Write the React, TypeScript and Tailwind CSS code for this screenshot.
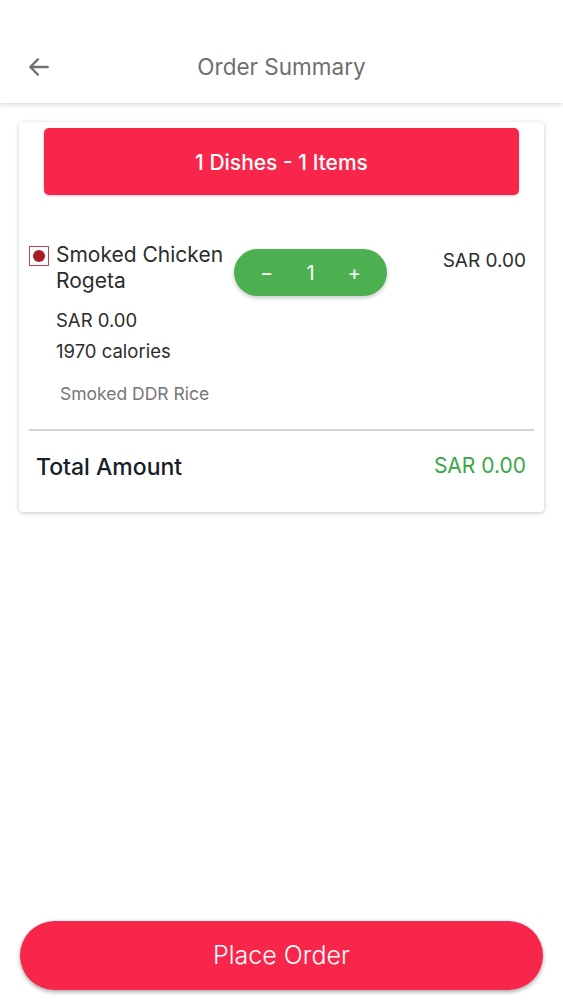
import React from 'react';

function BackArrow() {
  return (
    <svg width="26" height="26" viewBox="0 0 24 24" fill="none" stroke="#707070" strokeWidth="2.2" strokeLinecap="round" strokeLinejoin="round">
      <path d="M20 12H4.5" />
      <path d="M11 5l-7 7 7 7" />
    </svg>
  );
}

export default function App() {
  return (
    <div className="w-[563px] h-[1000px] bg-white flex flex-col" style={{ fontFamily: 'Inter, "Noto Sans", sans-serif' }}>
      {/* Header */}
      <div className="h-[103px] shrink-0 bg-white shadow-[0_2px_4px_rgba(0,0,0,0.14)] flex items-end pb-[22px] px-[25px] relative z-10">
        <button className="w-[28px] h-[28px] flex items-center justify-center">
          <BackArrow />
        </button>
        <div className="flex-1 text-center text-[22.5px] text-[#6f6f6f] pr-[28px] leading-[28px]">Order Summary</div>
      </div>

      {/* Card */}
      <div className="px-[19px] pt-[19px]">
        <div className="bg-white rounded-[4px] shadow-[0_1px_4px_rgba(0,0,0,0.22)] pt-[6px] pb-[27px]">
          <div className="mx-[25px] h-[67px] rounded-[5px] bg-[#f9264b] shadow-[0_1px_3px_rgba(0,0,0,0.2)] flex items-center justify-center text-white text-[21px] font-medium pt-[2px]">
            1 Dishes - 1 Items
          </div>

          <div className="flex pl-[10px] pr-[18px] pt-[54px]">
            <div className="w-[20px] h-[20px] -mt-[3px] border border-[#c8444a] flex items-center justify-center shrink-0">
              <div className="w-[12px] h-[12px] rounded-full bg-[#a81e25]" />
            </div>
            <div className="ml-[7px] w-[178px]">
              <div className="text-[21px] leading-[26px] text-[#2c2c2c] -mt-[7px]">Smoked Chicken Rogeta</div>
              <div className="text-[18.5px] text-[#2c2c2c] mt-[14px] leading-[24px]">SAR 0.00</div>
              <div className="text-[18.5px] text-[#2c2c2c] mt-[7px] leading-[24px]">1970 calories</div>
              <div className="text-[17.5px] text-[#777777] mt-[20px] ml-[4px] leading-[22px]">Smoked DDR Rice</div>
            </div>
            <div className="mt-0">
              <div className="w-[153px] h-[47px] rounded-full bg-[#4caf50] shadow-[0_2px_4px_rgba(0,0,0,0.22)] flex items-center justify-between px-[26px] text-white text-[20px]">
                <span>−</span>
                <span>1</span>
                <span>+</span>
              </div>
            </div>
            <div className="flex-1 text-right text-[19px] text-[#2c2c2c] leading-[24px]">SAR 0.00</div>
          </div>

          <div className="mx-[10px] mt-[24px] h-[2px] bg-[#d3d3d3]" />

          <div className="flex items-center justify-between pl-[17px] pr-[18px] pt-[19px]">
            <div className="text-[23px] text-[#15202b] font-medium">Total Amount</div>
            <div className="text-[21px] text-[#3aa845] -mt-[4px]">SAR 0.00</div>
          </div>
        </div>
      </div>

      <div className="flex-1" />

      <div className="px-[20px] pb-[10px]">
        <button className="w-full h-[69px] rounded-full bg-[#f9264b] shadow-[0_2px_4px_rgba(0,0,0,0.35)] text-white text-[25px] font-light">
          Place Order
        </button>
      </div>
    </div>
  );
}
